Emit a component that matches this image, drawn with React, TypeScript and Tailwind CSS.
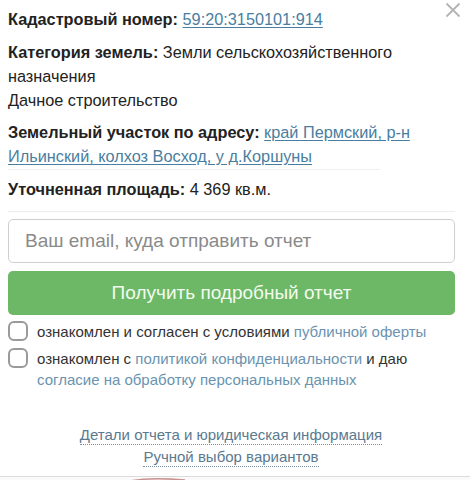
import React from "react";

export default function App() {
  const font = { fontFamily: '"Liberation Sans", Arial, sans-serif' };
  return (
    <div className="w-[470px] h-[480px] bg-white overflow-hidden relative text-[#222] text-[16.3px]" style={font}>
      <button className="absolute right-[8px] top-[1px] w-[18px] h-[18px] flex items-center justify-center">
        <svg width="16" height="16" viewBox="0 0 16 16">
          <path d="M1.5 1.5 L14.5 14.5 M14.5 1.5 L1.5 14.5" stroke="#b4b4b4" strokeWidth="1.8" />
        </svg>
      </button>
      <div className="px-[8px] pt-[7px]">
        <div className="leading-[24px] pb-[6px]">
          <b>Кадастровый номер:</b>{" "}
          <a className="text-[#4a7ea0] underline underline-offset-2">59:20:3150101:914</a>
        </div>
        <div className="leading-[24px] pt-[3px] pb-[5px]">
          <div>
            <b>Категория земель:</b> Земли сельскохозяйственного
          </div>
          <div>назначения</div>
          <div>Дачное строительство</div>
        </div>
        <div className="leading-[24px] pt-[3px] pb-[1px]">
          <div>
            <b>Земельный участок по адресу:</b>{" "}
            <a className="text-[#4a7ea0] underline underline-offset-2">край Пермский, р-н</a>
          </div>
          <div>
            <a className="text-[#4a7ea0] underline underline-offset-2">Ильинский, колхоз Восход, у д.Коршуны</a>
          </div>
        </div>
        <div className="border-t border-[#f0f0f0] w-[372px]" />
        <div className="leading-[24px] pt-[7px] pb-[10px]">
          <b>Уточненная площадь:</b> 4 369 кв.м.
        </div>
        <div className="border-t border-[#ececec] w-[447px]" />
        <input
          className="mt-[7px] block w-[447px] h-[44px] border border-[#cfcfcf] rounded-[5px] px-[16px] text-[19px] text-[#333] placeholder:text-[#8a8a8a] outline-none"
          style={font}
          placeholder="Ваш email, куда отправить отчет"
        />
        <button
          className="mt-[8px] block w-[447px] h-[44px] rounded-[5px] bg-[#6cb866] text-[#f3fbef] text-[19px]"
          style={font}
        >
          Получить подробный отчет
        </button>
        <div className="mt-[6px] flex items-start gap-[9px] text-[15px] leading-[21px] text-[#333]">
          <span className="w-[20px] h-[20px] rounded-[6px] border-[2px] border-[#9a9a9a] shrink-0" />
          <span>
            ознакомлен и согласен с условиями <a className="text-[#6a93b0]">публичной оферты</a>
          </span>
        </div>
        <div className="mt-[6px] flex items-start gap-[9px] text-[15px] leading-[21px] text-[#333]">
          <span className="w-[20px] h-[20px] rounded-[6px] border-[2px] border-[#9a9a9a] shrink-0" />
          <div>
            <div>
              ознакомлен с <a className="text-[#6a93b0]">политикой конфиденциальности</a> и даю
            </div>
            <div>
              <a className="text-[#6a93b0]">согласие на обработку персональных данных</a>
            </div>
          </div>
        </div>
        <div className="mt-[35px] pr-[8px] flex flex-col items-center text-[15px] text-[#5a7a90]">
          <a className="border-b border-dotted border-[#7a90a0] leading-[19px]">Детали отчета и юридическая информация</a>
          <a className="mt-[2px] border-b border-dotted border-[#7a90a0] leading-[19px]">Ручной выбор вариантов</a>
        </div>
      </div>
      <div className="absolute left-0 right-0 top-[476px] h-[4px] border-t border-[#dcdcdc] bg-[#fafafa]">
        <svg className="absolute left-0 top-0" width="470" height="4">
          <path d="M130 4 Q150 0 185 3" stroke="#c89090" strokeWidth="1.5" fill="none" />
        </svg>
      </div>
    </div>
  );
}
